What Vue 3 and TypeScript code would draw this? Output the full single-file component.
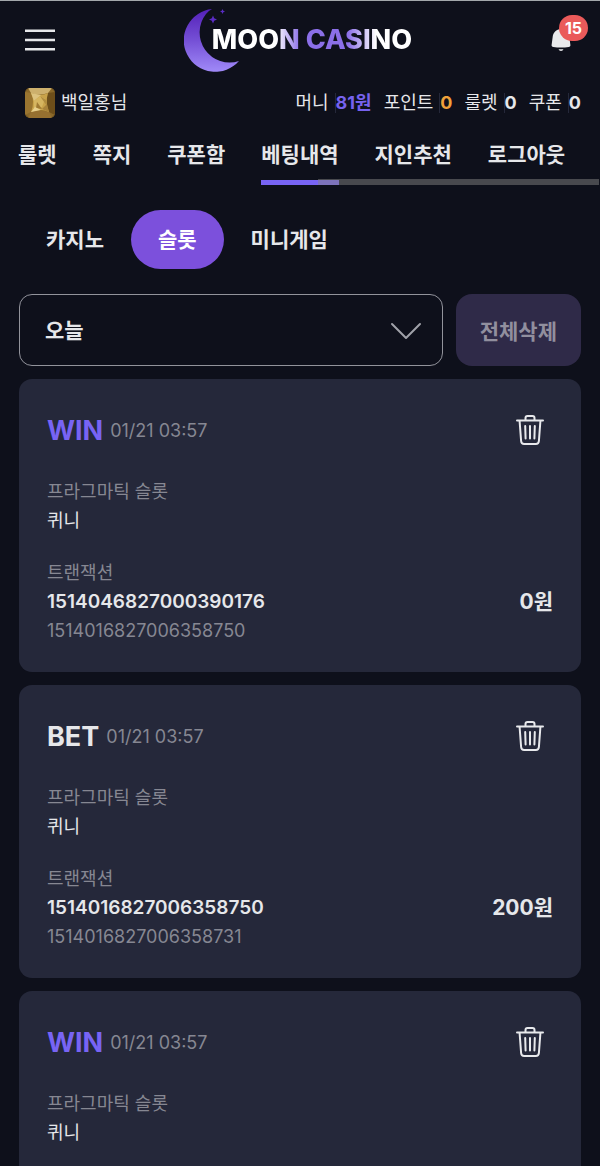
<script setup lang="ts">
import { ref } from 'vue'

interface Transaction {
  id: string
  reference: string
  amount: string
}
interface Entry {
  kind: 'WIN' | 'BET'
  time: string
  vendor: string
  game: string
  transaction?: Transaction
}

const balances = [
  { label: '머니', value: '81원', tone: 'violet' },
  { label: '포인트', value: '0', tone: 'amber' },
  { label: '룰렛', value: '0', tone: 'plain' },
  { label: '쿠폰', value: '0', tone: 'plain' },
]
const menu = ['룰렛', '쪽지', '쿠폰함', '베팅내역', '지인추천', '로그아웃']
const activeMenu = ref('베팅내역')
const categories = ['카지노', '슬롯', '미니게임']
const activeCategory = ref('슬롯')
const period = ref('오늘')

const entries = ref<Entry[]>([
  {
    kind: 'WIN',
    time: '01/21 03:57',
    vendor: '프라그마틱 슬롯',
    game: '퀴니',
    transaction: { id: '1514046827000390176', reference: '1514016827006358750', amount: '0원' },
  },
  {
    kind: 'BET',
    time: '01/21 03:57',
    vendor: '프라그마틱 슬롯',
    game: '퀴니',
    transaction: { id: '1514016827006358750', reference: '1514016827006358731', amount: '200원' },
  },
  { kind: 'WIN', time: '01/21 03:57', vendor: '프라그마틱 슬롯', game: '퀴니' },
])

function removeEntry(index: number) {
  entries.value.splice(index, 1)
}
</script>

<template>
  <div class="app">
    <header class="topbar">
      <button class="icon-button" type="button">
        <svg width="30" height="24" viewBox="0 0 30 24" aria-hidden="true">
          <path d="M0 2.7h30M0 12h30M0 21.3h30" stroke="#e6e7ea" stroke-width="2.4" />
        </svg>
      </button>
      <a class="logo" href="#">
        <svg class="moon" width="56" height="66" viewBox="182 7 56 66" aria-hidden="true">
          <defs>
            <linearGradient id="moonFill" x1="0" y1="0" x2="0" y2="1">
              <stop offset="0" stop-color="#5420b8" />
              <stop offset="0.5" stop-color="#7550d6" />
              <stop offset="1" stop-color="#a08af8" />
            </linearGradient>
          </defs>
          <path d="M210 9A31.5 31.5 0 1 0 237 61A30 30 0 0 1 204 14Q206 11 210 9Z" fill="url(#moonFill)" />
          <path d="M211 15.500l1.200 2.800 2.800 1.200-2.800 1.200-1.200 2.800-1.200-2.800-2.800-1.200 2.800-1.200zM220.500 9l.8 1.700 1.700.8-1.700.8-.8 1.700-.8-1.700-1.700-.8 1.700-.8z" fill="#5a2cc4" />
        </svg>
        <span class="wordmark">MOON CASINO</span>
      </a>
      <button class="icon-button bell" type="button">
        <svg width="20" height="24" viewBox="0 0 20 24" aria-hidden="true">
          <path d="M10 1C5.200 1 2 4.600 1.600 9.500L.6 17c-.1 1.300.4 1.700 1.700 1.900Q10 20 17.700 18.900c1.300-.2 1.800-.6 1.700-1.900l-1-7.500C18 4.600 14.800 1 10 1z" fill="#e9eaec" />
          <path d="M7.500 21.200h5q-.6 1.800-2.500 1.800t-2.500-1.800z" fill="#e9eaec" />
        </svg>
        <span class="badge">15</span>
      </button>
    </header>

    <section class="account">
      <div class="user">
        <svg width="30" height="30" viewBox="0 0 30 30" aria-hidden="true">
          <defs>
            <clipPath id="gemClip"><rect width="30" height="30" rx="5" /></clipPath>
          </defs>
          <g clip-path="url(#gemClip)">
            <path d="M0 0h30v30H0z" fill="#8a6829" />
            <path d="M3 0h24l-4 5Q14 8 6 5z" fill="#cdb06d" />
            <path d="M0 4l6 1q4 10 0 19l-6 3z" fill="#9a7530" />
            <path d="M30 4l-7 1q-4 10 1 19l6 3z" fill="#6d4e1a" />
            <path d="M6 24q9-3 18 0l3 6H3z" fill="#967030" />
            <path d="M6 5q9 4 17 0-3 10 1 19-9-4-18 0 4-10 0-19z" fill="#c9a34a" />
            <path d="M6 5l10 2-7 6z" fill="#ddc380" />
            <path d="M9 13l6-5 5 3-3 8-8 2z" fill="#d6b560" />
            <path d="M12 14l5 7-6-1z" fill="#a07a33" />
            <path d="M15 8l6 4 1 6-5-7z" fill="#b08c3f" />
            <path d="M17 21l5-5 2 8z" fill="#a8823a" />
            <path d="M6 24l4-5 6 3z" fill="#e8d08c" />
            <path d="M0 0h4L0 4zM26 0h4v4zM0 26l4 4H0zM30 26v4h-4z" fill="#6e5220" />
          </g>
        </svg>
        <span>백일홍님</span>
      </div>
      <dl class="balances">
        <div v-for="b in balances" :key="b.label" class="balance">
          <dt>{{ b.label }}</dt>
          <dd :class="b.tone">{{ b.value }}</dd>
        </div>
      </dl>
    </section>

    <nav class="menu">
      <a
        v-for="item in menu"
        :key="item"
        href="#"
        :class="{ active: item === activeMenu }"
        @click.prevent="activeMenu = item"
      >{{ item }}</a>
      <span class="scroll-thumb" aria-hidden="true"></span>
    </nav>

    <main class="content">
      <div class="categories">
        <button
          v-for="c in categories"
          :key="c"
          type="button"
          :class="{ active: c === activeCategory }"
          @click="activeCategory = c"
        >{{ c }}</button>
      </div>

      <form class="filters" @submit.prevent>
        <label class="period">
          <select v-model="period">
            <option>오늘</option>
          </select>
          <svg class="chevron" width="32" height="18" viewBox="0 0 32 18" aria-hidden="true">
            <path d="M2 2l14 14L30 2" fill="none" stroke="#a0a1a9" stroke-width="2" stroke-linecap="round" stroke-linejoin="round" />
          </svg>
        </label>
        <button class="clear" type="button" @click="entries = []">전체삭제</button>
      </form>

      <div class="list">
        <article v-for="(entry, i) in entries" :key="i" class="card">
          <header class="card-head">
            <h2 :class="{ win: entry.kind === 'WIN' }">{{ entry.kind }}</h2>
            <time>{{ entry.time }}</time>
            <button class="icon-button trash" type="button" @click="removeEntry(i)">
              <svg width="30" height="32" viewBox="0 0 30 32" aria-hidden="true">
                <g fill="none" stroke="#e8e9ec" stroke-width="2" stroke-linecap="round" stroke-linejoin="round">
                  <path d="M2 6.500h26" />
                  <path d="M10.500 6V4q0-2 2-2h5q2 0 2 2v2" />
                  <path d="M4.600 7l1.500 20q.3 3 3 3h11.800q2.700 0 3-3L25.400 7" />
                  <path d="M10.200 12l.4 12.500M15 12v12.500M19.800 12l-.4 12.500" />
                </g>
              </svg>
            </button>
          </header>
          <div class="group">
            <p class="muted">{{ entry.vendor }}</p>
            <p>{{ entry.game }}</p>
          </div>
          <div v-if="entry.transaction" class="group">
            <p class="muted">트랜잭션</p>
            <p class="result">
              <b>{{ entry.transaction.id }}</b>
              <strong>{{ entry.transaction.amount }}</strong>
            </p>
            <p class="muted">{{ entry.transaction.reference }}</p>
          </div>
        </article>
      </div>
    </main>
  </div>
</template>

<style>
body {
  margin: 0;
  background: #0e101b;
}
</style>

<style scoped>
.app {
  box-sizing: border-box;
  height: 100vh;
  overflow: hidden auto;
  scrollbar-width: none;
  border-top: 1px solid #a3a7ab;
  background: #0e101b;
  color: #e6e7ea;
  font-family: Inter, "Noto Sans CJK KR", sans-serif;
  font-size: 18px;
}
button,
select {
  margin: 0;
  border: 0;
  background: none;
  color: inherit;
  font: inherit;
  cursor: pointer;
}
a {
  color: inherit;
  text-decoration: none;
}
svg {
  display: block;
}
p,
h2,
dl,
dd {
  margin: 0;
}
.icon-button {
  padding: 0;
}
.topbar {
  display: grid;
  grid-template-columns: 1fr auto 1fr;
  align-items: center;
  height: 78px;
  padding: 0 29px 0 25px;
}
.topbar .icon-button {
  justify-self: start;
}
.logo {
  display: flex;
  align-items: center;
}
.wordmark {
  margin-left: -28px;
  background: linear-gradient(90deg, #fff 32%, #8b6fe8 44%, #8b6fe8 68%, #fff 82%);
  background-clip: text;
  color: transparent;
  font-size: 27px;
  font-weight: 800;
  line-height: 32px;
  white-space: nowrap;
}
.topbar .bell {
  position: relative;
  justify-self: end;
}
.badge {
  position: absolute;
  left: 8px;
  bottom: 11px;
  min-width: 29px;
  border-radius: 13px;
  background: #ea5a5a;
  color: #fff;
  font-size: 16px;
  font-weight: 700;
  line-height: 26px;
}
.account {
  display: flex;
  align-items: center;
  justify-content: space-between;
  height: 47px;
  padding: 0 19px 0 25px;
  line-height: 28px;
}
.user {
  display: flex;
  align-items: center;
  gap: 6px;
}
.balances {
  display: flex;
  gap: 12px;
}
.balance {
  display: flex;
  align-items: center;
  gap: 6px;
}
.balance dd {
  border-left: 1px solid #25283a;
  font-weight: 700;
  line-height: 20px;
}
.balance .violet {
  color: #7662ee;
}
.balance .amber {
  color: #f0a13a;
}
.menu {
  position: relative;
  display: flex;
  gap: 36px;
  padding: 0 18px;
  overflow: hidden;
  font-size: 21px;
  font-weight: 700;
  white-space: nowrap;
}
.menu a {
  padding: 12px 0 9px;
  border-bottom: 5px solid transparent;
  line-height: 33px;
}
.menu a.active {
  border-bottom-color: #7864f4;
}
.scroll-thumb {
  position: absolute;
  right: 1px;
  bottom: 0;
  left: 53%;
  height: 6px;
  background: rgba(130, 130, 130, 0.5);
}
.content {
  padding: 25px 19px 19px;
}
.categories {
  display: flex;
  font-size: 21px;
  font-weight: 700;
}
.categories button {
  padding: 0 27px;
  border-radius: 30px;
  line-height: 59px;
}
.categories button.active {
  background: #7c50dc;
  color: #fff;
}
.filters {
  display: flex;
  gap: 13px;
  margin: 25px 0 13px;
  font-size: 21px;
  font-weight: 700;
}
.period {
  position: relative;
  flex: 1;
}
.period select {
  width: 100%;
  height: 72px;
  padding: 0 25px;
  border: 1px solid #92939b;
  border-radius: 13px;
  appearance: none;
}
.period option {
  background: #0e101b;
}
.chevron {
  position: absolute;
  top: 28px;
  right: 21px;
  pointer-events: none;
}
.clear {
  padding: 0 24px;
  border-radius: 16px;
  background: #2f2a48;
  color: #918f9e;
}
.list {
  display: grid;
  grid-auto-rows: 1fr;
  gap: 13px;
}
.card {
  padding: 28px 28px 27px;
  border-radius: 13px;
  background: #25283a;
}
.card-head {
  display: flex;
  align-items: center;
  gap: 7px;
  height: 46px;
  margin-bottom: 24px;
}
.card-head h2 {
  font-size: 27px;
  font-weight: 700;
}
.card-head .win {
  color: #7864f4;
}
.card-head time,
.muted {
  color: #868792;
}
.trash {
  margin-left: auto;
  margin-right: 8px;
}
.group {
  line-height: 29px;
}
.group + .group {
  margin-top: 23px;
}
.result {
  display: flex;
  align-items: center;
  justify-content: space-between;
  height: 29px;
}
.result b {
  font-size: 19px;
  font-weight: 600;
}
.result strong {
  font-size: 21px;
}
</style>
